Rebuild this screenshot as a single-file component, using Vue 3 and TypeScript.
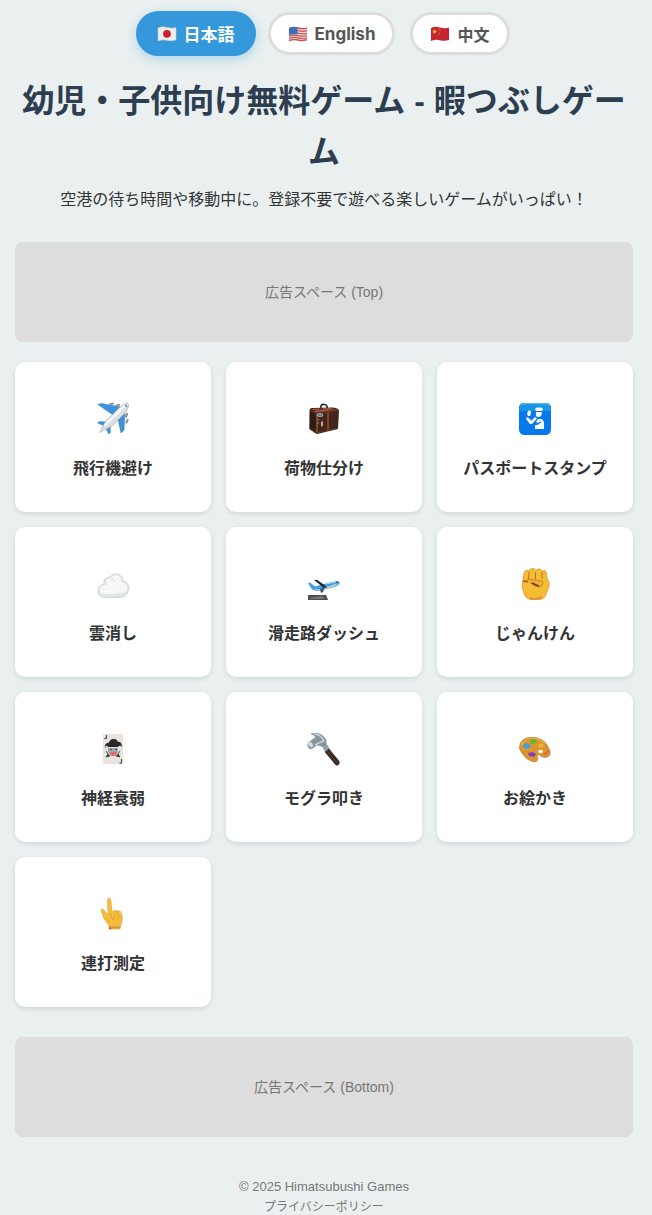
<script setup lang="ts">
import { ref } from 'vue'

interface Language {
  code: string
  label: string
}

interface Game {
  icon: string
  title: string
}

const languages: Language[] = [
  { code: 'ja', label: '日本語' },
  { code: 'en', label: 'English' },
  { code: 'zh', label: '中文' },
]

const games: Game[] = [
  { icon: 'plane', title: '飛行機避け' },
  { icon: 'luggage', title: '荷物仕分け' },
  { icon: 'passport', title: 'パスポートスタンプ' },
  { icon: 'cloud', title: '雲消し' },
  { icon: 'takeoff', title: '滑走路ダッシュ' },
  { icon: 'fist', title: 'じゃんけん' },
  { icon: 'joker', title: '神経衰弱' },
  { icon: 'hammer', title: 'モグラ叩き' },
  { icon: 'palette', title: 'お絵かき' },
  { icon: 'finger', title: '連打測定' },
]

const current = ref('ja')
</script>

<template>
  <div class="page" lang="ja">
    <nav class="languages" aria-label="言語">
      <button
        v-for="l in languages"
        :key="l.code"
        type="button"
        class="language"
        :class="[l.code, { active: current === l.code }]"
        :aria-pressed="current === l.code"
        @click="current = l.code"
      >
        <svg class="flag" viewBox="0 0 20 16" aria-hidden="true">
          <g v-if="l.code === 'ja'">
            <path d="M1 2Q5 0 10 1.4T19 1.5V14Q14 15.500 10 14.300T1 15Z" fill="#eeeeed" stroke="#c9cfd2" stroke-width=".6" />
            <circle cx="10" cy="7.800" r="3.900" fill="#c9202f" />
          </g>
          <g v-else-if="l.code === 'en'">
            <path d="M1 2Q5 0 10 1.4T19 1.500V14Q14 15.500 10 14.300T1 15Z" fill="#efd9d8" />
            <g fill="none" stroke="#c9565a" stroke-width="1.300">
              <path d="M1 2.600Q5 .6 10 2T19 2.100M1 5.200Q5 3.200 10 4.600T19 4.700M1 7.800Q5 5.800 10 7.200T19 7.300M1 10.200Q5 8.200 10 9.600T19 9.700M1 12.500Q5 10.500 10 11.900T19 12M1 14.600Q5 12.800 10 14T19 13.700" />
            </g>
            <path d="M1 2Q5 .4 9.500 1.300V8.300Q5 7.500 1 9Z" fill="#3971b8" />
          </g>
          <g v-else>
            <path d="M1 2Q5 0 10 1.400T19 1.500V14Q14 15.500 10 14.300T1 15Z" fill="#c72432" />
            <path d="M4.500 3l.7 1.700 1.900.1-1.500 1.200.5 1.800-1.600-1-1.600 1 .5-1.800L2 4.800l1.800-.1z" fill="#f0b83c" />
            <path d="M8 2.500h1M9.500 4.500h1M9.300 7h1M7.800 9h1" stroke="#e99b35" />
          </g>
        </svg>
        <span>{{ l.label }}</span>
      </button>
    </nav>

    <header class="intro">
      <h1>幼児・子供向け無料ゲーム - 暇つぶしゲーム</h1>
      <p>空港の待ち時間や移動中に。登録不要で遊べる楽しいゲームがいっぱい！</p>
    </header>

    <aside class="ad">広告スペース (Top)</aside>

    <main class="games">
      <a v-for="g in games" :key="g.icon" class="card" href="#">
        <svg class="icon" viewBox="0 0 56 46" aria-hidden="true">
          <g v-if="g.icon === 'plane'">
            <path d="M13 9.500L16.500 8.500 36 12 28 20ZM33 24L40 16 39 35 36 38Z" fill="#3c93dc" stroke="#2b78b8" stroke-width=".5" />
            <path d="M12.500 28l2-1.500 8 .5-3 4zM21 33l4-3 .5 7.500-2 1.500z" fill="#3c93dc" stroke="#2b78b8" stroke-width=".4" />
            <path d="M14.500 37.500L21 26 34 13Q40 7.500 43 8.500Q45 11 40 18L27 31Z" fill="#dcdee1" stroke="#a1a6aa" stroke-width=".6" />
            <path d="M20 30L39.500 11" stroke="#f7f8f8" stroke-width="2.600" stroke-linecap="round" />
            <path d="M40 10l2 2" stroke="#747c84" stroke-width="1.300" />
            <path d="M25.500 9l2.500-.5M31.500 10.500l2.500-.5M41 21.500l1-2.500M41.500 27.500l1-2.500" stroke="#8d959b" stroke-width="2.200" stroke-linecap="round" />
          </g>
          <g v-else-if="g.icon === 'luggage'">
            <path d="M25 14Q24 9 28 9.500T31 14" fill="none" stroke="#292e30" stroke-width="1.700" />
            <path d="M13.500 15Q14 13 16 13L37 12.500Q43 13 43 16L42 34 21 39 13.500 34Z" fill="#432619" />
            <path d="M15 14L36 13 42 15.500 20 18Z" fill="#6c3e31" />
            <path d="M17 14.500l6-.5m4 0 8-.5M19 16.500l14-1.500" stroke="#b8594b" stroke-width="1.100" />
            <path d="M14 15l5 3 1 20.500-6.500-4.500z" fill="#2f1d17" />
            <path d="M21 18.500v19M32 17v19" stroke="#7d4527" stroke-width="2" />
            <path d="M14 16l6 2.500 22-3M14 33l7 5 21-5" fill="none" stroke="#68371f" stroke-width="1" />
            <ellipse cx="24" cy="20" rx="3.200" ry="2" fill="#8fa9b4" />
            <path d="M22 20h4" stroke="#435869" />
            <path d="M25 27l2-1v5l-2 .5z" fill="#c6aa8e" />
            <path d="M22 24l1.500 1M21 28h2" stroke="#a39b82" />
          </g>
          <g v-else-if="g.icon === 'passport'">
            <rect x="12" y="8" width="32" height="32" rx="5.500" fill="#0878ed" />
            <path d="M12 16v-3q0-5 5-5h22q5 0 5 5v3z" fill="#1695e2" />
            <path d="M14 10Q16 8.700 19 8.700H38Q41 8.700 43 11" stroke="#66bfec" fill="none" />
            <path d="M28 14l1.500-1.500h5L36 14l-1 2h-6zM29 17h6q0 5-3.500 5T29 18zM21 16l2.500-.5L24 18l-1 3h-2l-1-2zM20 22l3 2 1 2 4-4 2 1.500-5 5.500h-2l-4-5zM29 27l2-3h4l2 3v7h-9v-4l5-1z" fill="#f4faff" />
            <path d="M28 30l6-3" stroke="#0878ed" stroke-width="1.200" />
          </g>
          <g v-else-if="g.icon === 'cloud'">
            <path d="M19 37.500Q13 37 13 31Q13 25 19 24Q18 17 25 17Q29 12 35 15Q38 17 38 21Q44 22 44 29Q43 36 36 37.500Z" fill="#e2e4e5" stroke="#c9cdce" stroke-width=".7" />
            <path d="M18 34Q14 32 15 28Q18 24 22 25Q20 19 25 18Q29 14 33 16Q38 18 36 22Q43 23 42 30Q40 34 33 33Q26 35 18 34" fill="#f6f7f7" />
            <path d="M25 19q4-1 5 3" stroke="#d9dddf" fill="none" />
          </g>
          <g v-else-if="g.icon === 'takeoff'">
            <path d="M12 23l2-.5 5 4 11-3 8-2q5-.5 6 1-1 3-7 5l-13 3q-4 .8-8-1z" fill="#399ee7" />
            <path d="M17 28q7 3 13-1l12-4q-2 4-8 5l-10 2.500q-4 .5-7-2.500z" fill="#bac7d3" />
            <path d="M18 20l3-.3 7 5 3 3-3 .2-5-4z" fill="#202a34" />
            <path d="M24 29l5-2-2 5-2 1z" fill="#405467" />
            <path d="M30 24l10-2" stroke="#a0daf9" />
            <path d="M40 22l2 .5" stroke="#22587f" stroke-width="1.500" />
            <path d="M12 35h18l2 5H12z" fill="#4b4c4f" />
            <path d="M13 38l13-2 3 3H15" fill="#777" />
          </g>
          <g v-else-if="g.icon === 'fist'">
            <path d="M16 20l1-7q1-4 5-2 1-3 4-2.500 2 0 3 2 2-3 5-1 1 1 1 2 3-2 4 0l1 7q3 3 2 8l-3 8q-2 5-7 5h-7q-6 0-8-6l-2-7z" fill="#f5bd34" stroke="#ce8b27" stroke-width=".7" />
            <path d="M22 12l-.5 7M28.500 12v7M35 12v7" stroke="#be7721" stroke-width="1" />
            <path d="M17 21q5-3 11-1 6 0 8 2l-1 4q-3 2-8-.5l-4-3" fill="#f3b02d" stroke="#b87925" stroke-width=".8" />
            <path d="M25 23l4 2 3 1" stroke="#663c22" stroke-width="1.700" fill="none" />
            <path d="M16 21l5 1" stroke="#c75024" stroke-width="1.300" />
            <path d="M23 38q5 2 12-1" stroke="#e98743" stroke-width="1.500" fill="none" />
          </g>
          <g v-else-if="g.icon === 'joker'">
            <rect x="18" y="9" width="20" height="30" rx="1" fill="#ece3dc" />
            <path d="M21.500 10v3q-1 1-2 0M34.500 38q2 1 2-1v-3" stroke="#465056" stroke-width="1.200" fill="none" />
            <path d="M20 21q0-3 4-3.500 1-4 5-3.500 3 0 4 3 3-1 4 4-3-1-4 1H23q-1-2-3-1z" fill="#242a2e" />
            <path d="M23 23h10v4l-3 4h-4l-3-4z" fill="#9ba7ab" />
            <path d="M25 24.500h2m3 0h2" stroke="#3c484d" stroke-width="1.200" />
            <path d="M25 27h7l-1 3q-3 2-5 0z" fill="#ec666a" />
            <path d="M21 26l2 3-2 3 4-1m10-5-2 3 2 3-4-1" fill="#333b40" stroke="#333b40" stroke-width=".8" />
            <circle cx="20.500" cy="22" r=".8" fill="#596366" />
            <circle cx="36.500" cy="21" r=".8" fill="#596366" />
          </g>
          <g v-else-if="g.icon === 'hammer'">
            <path d="M25 19l4-2 5 8-4 3z" fill="#92a3b0" stroke="#6d7e8a" stroke-width=".5" />
            <path d="M29 27l4-3 10 12q1 3-1 4-2 1-3-1z" fill="#39251e" stroke="#29262b" stroke-width=".5" />
            <path d="M31 26l10 12" stroke="#66463a" stroke-width="1" />
            <path d="M12 18l4-3 3-2q2-2-4-4 8-2 12 2l3 4q1 2-1 5l-4 1-4-1-4 3-3 1q-3-2-2-6z" fill="#87969f" stroke="#6b7982" stroke-width=".5" />
            <path d="M18 9q5 0 8 4l2 3-5 2-4 2" fill="none" stroke="#c8d2d8" stroke-width="1.500" />
            <ellipse cx="14.500" cy="19.500" rx="2" ry="3" transform="rotate(-35 14.500 19.500)" fill="#d6dddf" />
          </g>
          <g v-else-if="g.icon === 'palette'">
            <path d="M13 20Q14 14 22 12.500Q34 11 40 20Q45 28 42 31Q38 34 34 31Q31 28 30 31Q32 36 28 37Q20 36 15 28Q11 23 13 20Z" fill="#dc9430" stroke="#b87628" stroke-width=".7" />
            <path d="M14 21Q17 14 25 13Q33 13 38 19" fill="none" stroke="#eeb94f" stroke-width="1" />
            <path d="M23 15l3-1 3 1v3l-4 1-2-1z" fill="#63b82d" />
            <path d="M17 19l3-1 3 2v3l-4 1-3-2z" fill="#3ba3dd" />
            <path d="M21 28l5-1 3 2-2 3-5-1z" fill="#843fb7" />
            <path d="M31 20l3-2 3 2-1 2-4 1z" fill="#e9b335" />
            <path d="M37 29q4-1 4-4" fill="none" stroke="#d9694c" stroke-width="2" />
            <ellipse cx="33.500" cy="26.500" rx="2.300" ry="1.800" fill="#fff" />
          </g>
          <g v-else>
            <path d="M22.500 11q0-3 1.500-3t2 3l1 11q3-3 5-1 4-1 4 2 2 3 1 8l-2 8H25l-2-5-4-5-3-9q1-2 3 0l4 5z" fill="#f5bd3d" stroke="#dca435" stroke-width=".6" />
            <path d="M26 23v4q1 3 3 2l1-5M31 23q4 0 3 5l-3 2M22 28l2 4" fill="none" stroke="#dc9c35" stroke-width=".8" />
            <path d="M24 37q5 1 11 0" stroke="#df9438" stroke-width="2" fill="none" />
            <path d="M24 38l2 1" stroke="#cc4938" stroke-width="1.500" />
          </g>
        </svg>
        <span class="title">{{ g.title }}</span>
      </a>
    </main>

    <aside class="ad bottom">広告スペース (Bottom)</aside>

    <footer class="footer">
      <span>© 2025 Himatsubushi Games</span>
      <a href="#">プライバシーポリシー</a>
    </footer>
  </div>
</template>

<style>
html,
body {
  background: #eaf0f0;
}
body {
  margin: 0;
}
</style>

<style scoped>
.page {
  padding: 11px 19px 0 15px;
  color: #333;
  font-family: "Liberation Sans", "Noto Sans CJK JP", sans-serif;
  font-size: 16px;
  line-height: 26px;
}
.languages {
  display: flex;
  flex-wrap: wrap;
  justify-content: center;
  align-items: center;
  gap: 15px;
}
.language {
  display: flex;
  align-items: center;
  gap: 7px;
  height: 43px;
  padding: 0 17px;
  border: 3px solid #ddd;
  border-radius: 25px;
  background: #fff;
  color: #555;
  font-family: Inter, "Noto Sans CJK JP", sans-serif;
  font-size: 16px;
  font-weight: 700;
  cursor: pointer;
}
.language.en {
  font-size: 17px;
}
.language.active {
  height: 45px;
  margin: 0 -3px;
  padding: 0 18px;
  border-color: #3498db;
  background: #3498db;
  color: #fff;
  font-size: 17px;
  box-shadow: 0 4px 12px rgba(52, 152, 219, 0.3);
}
.flag {
  width: 20px;
  height: 16px;
}
.intro {
  margin-top: 20px;
  text-align: center;
}
h1 {
  margin: 0;
  color: #2c3e50;
  font-size: 32px;
  line-height: 51px;
}
p {
  margin: 9px 0 0;
}
.ad {
  display: flex;
  align-items: center;
  justify-content: center;
  min-height: 100px;
  margin: 29px 0 20px;
  border-radius: 8px;
  background: #ddd;
  color: #777;
  font-size: 14px;
}
.games {
  display: grid;
  grid-template-columns: repeat(3, 1fr);
  gap: 15px;
}
.card {
  display: flex;
  flex-direction: column;
  align-items: center;
  gap: 15px;
  padding: 33px 10px 30px;
  border-radius: 10px;
  background: #fff;
  color: #333;
  text-decoration: none;
  box-shadow: 0 2px 5px rgba(0, 0, 0, 0.1);
}
.icon {
  width: 56px;
  height: 46px;
}
.title {
  font-weight: 700;
}
.ad.bottom {
  margin: 30px 0 40px;
}
.footer {
  display: flex;
  flex-direction: column;
  align-items: center;
  color: #777;
  font-size: 13px;
  line-height: 20px;
}
.footer a {
  color: #777;
  font-size: 12px;
  text-decoration: none;
}
</style>
